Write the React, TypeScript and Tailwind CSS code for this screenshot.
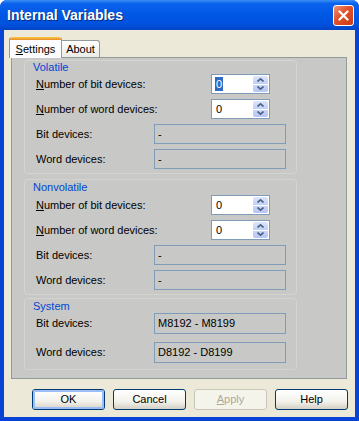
import type { ReactNode } from "react";

function Arrow({ up }: { up?: boolean }) {
  return (
    <svg width="7" height="4" viewBox="0 0 7 4" className="block">
      <polyline
        points={up ? "0.5,3.5 3.5,0.8 6.5,3.5" : "0.5,0.5 3.5,3.2 6.5,0.5"}
        fill="none"
        stroke="#4d6185"
        strokeWidth="1.6"
      />
    </svg>
  );
}

function SpinBox({ selected }: { selected?: boolean }) {
  return (
    <div className="flex h-[20px] w-[59px] border border-[#7f9db9] bg-white p-[1px]">
      <div className="flex flex-1 items-center pl-[2px]">
        <span
          className={
            selected
              ? "bg-[#316ac5] px-[1px] leading-[14px] text-white"
              : "px-[1px] leading-[14px]"
          }
        >
          0
        </span>
      </div>
      <div className="flex w-[15px] flex-col gap-[1px]">
        <div className="flex flex-1 items-center justify-center rounded-t-[2px] bg-[linear-gradient(#dce6fb,#c0d0f5)]">
          <Arrow up />
        </div>
        <div className="flex flex-1 items-center justify-center rounded-b-[2px] bg-[linear-gradient(#c8d6f8,#b4c6f2)]">
          <Arrow />
        </div>
      </div>
    </div>
  );
}

function Field({ value, tall }: { value: string; tall?: boolean }) {
  return (
    <div
      className={`flex w-[132px] items-center border border-[#7f9db9] pl-[3px] ${
        tall ? "h-[21px]" : "h-[20px]"
      }`}
    >
      {value}
    </div>
  );
}

function NumberRow({ word, selected }: { word?: boolean; selected?: boolean }) {
  return (
    <div className="flex h-[20px] items-center">
      <span className="w-[175px]">
        <u>N</u>umber of {word ? "word" : "bit"} devices:
      </span>
      <SpinBox selected={selected} />
    </div>
  );
}

function FieldRow({
  label,
  value,
  tall,
}: {
  label: string;
  value: string;
  tall?: boolean;
}) {
  return (
    <div className="flex items-center">
      <span className="w-[118px]">{label}</span>
      <Field value={value} tall={tall} />
    </div>
  );
}

function Group({
  title,
  children,
  className,
}: {
  title: string;
  children: ReactNode;
  className?: string;
}) {
  return (
    <div
      className={`ml-[12px] w-[273px] rounded-[4px] border border-[#d4d4d1] ${className ?? ""}`}
    >
      <div className="h-[13px] pl-[8px] leading-[13px] text-[#0046d5]">
        {title}
      </div>
      {children}
    </div>
  );
}

function Button({
  children,
  focused,
  disabled,
}: {
  children: ReactNode;
  focused?: boolean;
  disabled?: boolean;
}) {
  if (disabled) {
    return (
      <div className="flex h-[21px] w-[73px] items-center justify-center rounded-[3px] border border-[#c9c7ba] bg-[#f5f4ea] text-[#aca899]">
        {children}
      </div>
    );
  }
  return (
    <div className="h-[21px] w-[73px] rounded-[3px] border border-[#003c74] bg-[linear-gradient(#ffffff,#f3f2ec_60%,#d6d0c5)]">
      <div
        className={`flex h-full items-center justify-center rounded-[2px] ${
          focused ? "border-2 border-[#9cbdf5]" : ""
        }`}
      >
        {children}
      </div>
    </div>
  );
}

export default function App() {
  return (
    <div className="h-[421px] w-[359px] bg-white font-['Liberation_Sans',Tahoma,Arial,sans-serif] text-[11px] text-black">
      <div className="flex h-full flex-col rounded-t-[7px] bg-[#0843d6]">
        <div className="flex h-[30px] items-center justify-between rounded-t-[7px] bg-[linear-gradient(#3c8ef5,#0a62ec_12%,#0058e6_45%,#0052de_80%,#0044c6)] pl-[7px] pr-[5px]">
          <span className="text-[14px] font-bold text-white [text-shadow:1px_1px_0_#0a2a7a]">
            Internal Variables
          </span>
          <div className="flex h-[21px] w-[21px] items-center justify-center rounded-[3px] border border-white bg-[linear-gradient(135deg,#f09278,#e0502a_45%,#c83c18)]">
            <svg width="11" height="11" viewBox="0 0 11 11">
              <path
                d="M1.5 1.5 L9.5 9.5 M9.5 1.5 L1.5 9.5"
                stroke="white"
                strokeWidth="2.2"
                strokeLinecap="round"
              />
            </svg>
          </div>
        </div>

        <div className="mx-[4px] mb-[4px] flex flex-1 flex-col bg-[#ece9d8]">
          <div className="mt-[7px] flex h-[20px] items-end pl-[5px]">
            <div className="relative z-10 -mb-px flex h-[21px] w-[53px] flex-col overflow-hidden rounded-t-[3px] border-x border-[#919b9c] bg-[#fcfcfe]">
              <div className="h-[3px] bg-[linear-gradient(#ffc83c,#e68b2c)]" />
              <div className="flex flex-1 items-center justify-center">
                <span>
                  <u>S</u>ettings
                </span>
              </div>
            </div>
            <div className="flex h-[17px] w-[38px] items-center justify-center rounded-tr-[3px] border-y border-r border-b-0 border-[#919b9c] bg-[linear-gradient(#ffffff,#ecebe6)]">
              About
            </div>
          </div>

          <div className="ml-[7px] w-[336px] border border-[#919b9c] bg-[#c8c8c6] pb-[8px] pt-[2px]">
            <Group title="Volatile" className="pb-[4px]">
              <div className="flex flex-col gap-[5px] pl-[11px]">
                <NumberRow selected />
                <NumberRow word />
                <FieldRow label="Bit devices:" value="-" />
                <FieldRow label="Word devices:" value="-" />
              </div>
            </Group>
            <Group title="Nonvolatile" className="mt-[5px] pb-[4px] pt-[1px]">
              <div className="mt-[1px] flex flex-col gap-[5px] pl-[11px]">
                <NumberRow />
                <NumberRow word />
                <FieldRow label="Bit devices:" value="-" />
                <FieldRow label="Word devices:" value="-" />
              </div>
            </Group>
            <Group title="System" className="mt-[3px] pb-[6px] pt-[1px]">
              <div className="flex flex-col gap-[8px] pl-[11px]">
                <FieldRow label="Bit devices:" value="M8192 - M8199" tall />
                <FieldRow label="Word devices:" value="D8192 - D8199" tall />
              </div>
            </Group>
          </div>

          <div className="mt-[10px] flex justify-end gap-[8px] pr-[7px]">
            <Button focused>OK</Button>
            <Button>Cancel</Button>
            <Button disabled>
              <span>
                <u>A</u>pply
              </span>
            </Button>
            <Button>Help</Button>
          </div>
        </div>
      </div>
    </div>
  );
}
